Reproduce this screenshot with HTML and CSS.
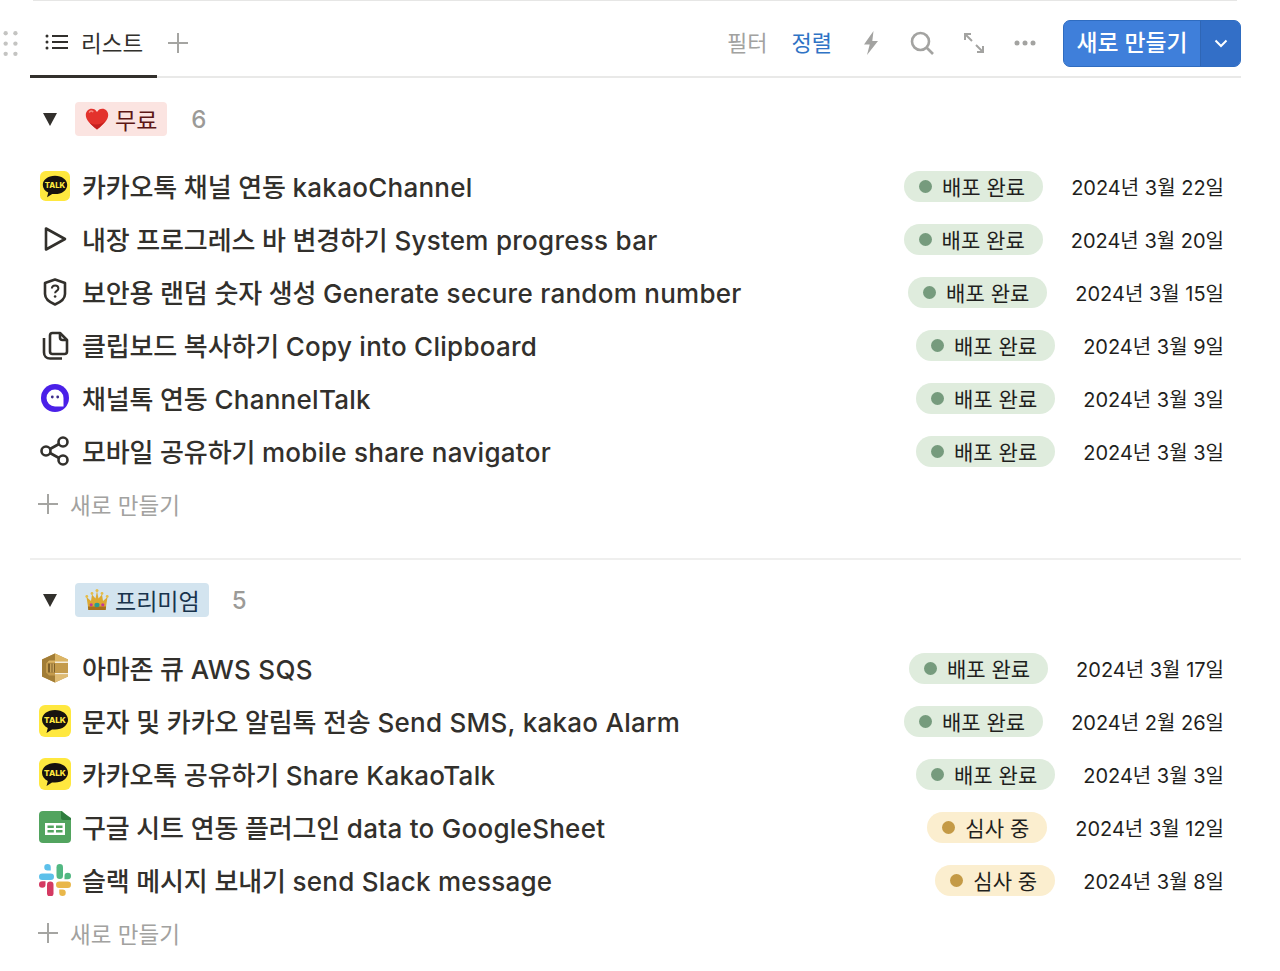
FILE: index.html
```html
<!DOCTYPE html>
<html lang="ko">
<head>
<meta charset="utf-8">
<title>리스트</title>
<link rel="stylesheet" href="styles.css">
</head>
<body>
<svg class="defs" width="0" height="0" aria-hidden="true">
  <defs>
    <symbol id="talk" viewBox="0 0 32 32">
      <rect width="32" height="32" rx="6" fill="#ffe83f"/>
      <path d="M16 5C8.500 5 3 9.300 3 14.800c0 3.500 2.300 6.500 5.800 8.200l-1.300 5 5.500-3.600c1 .2 2 .2 3 .2 7.500 0 13-4.300 13-9.800S23.500 5 16 5z" fill="#17120f"/>
      <text x="16" y="18.200" text-anchor="middle" class="talk-text">TALK</text>
    </symbol>
  </defs>
</svg>
<svg class="grip" viewBox="0 0 14 24" aria-hidden="true">
  <circle cx="3" cy="3" r="2"/><circle cx="12" cy="3" r="2"/>
  <circle cx="3" cy="12.500" r="2"/><circle cx="12" cy="12.500" r="2"/>
  <circle cx="3" cy="22" r="2"/><circle cx="12" cy="22" r="2"/>
</svg>
<main class="page">
  <div class="top-rule"></div>
  <header class="toolbar">
    <div class="tab">
      <svg class="tab-icon" viewBox="0 0 24 16" aria-hidden="true">
        <circle cx="2" cy="2" r="1.500"/><circle cx="2" cy="8" r="1.500"/><circle cx="2" cy="14" r="1.500"/>
        <path d="M7 2h16M7 8h16M7 14h16" stroke="#32302c" stroke-width="2" fill="none"/>
      </svg>
      <span>리스트</span>
    </div>
    <svg class="tab-add" viewBox="0 0 20 20" aria-hidden="true"><path d="M10 0v20M0 10h20"/></svg>
    <div class="tools">
      <span class="tool-text">필터</span>
      <span class="tool-text active">정렬</span>
      <svg class="tool-icon bolt" viewBox="0 0 16 24" aria-hidden="true"><path d="M10.500 0 1 13.500h5.700L4 24l11-14H9.300z"/></svg>
      <svg class="tool-icon search" viewBox="0 0 24 24" aria-hidden="true"><circle cx="10.500" cy="10.500" r="8.500"/><path d="m16.500 16.500 6.500 6.500"/></svg>
      <svg class="tool-icon expand" viewBox="0 0 22 22" aria-hidden="true"><path d="M2 8V2h6M2 2l7 7M20 14v6h-6M20 20l-7-7"/></svg>
      <svg class="tool-icon more" viewBox="0 0 22 6" aria-hidden="true"><circle cx="3" cy="3" r="2.500"/><circle cx="11" cy="3" r="2.500"/><circle cx="19" cy="3" r="2.500"/></svg>
      <div class="new-btn">
        <span class="new-label">새로 만들기</span>
        <span class="new-caret"><svg viewBox="0 0 14 9" aria-hidden="true"><path d="m1.500 1.500 5.500 5.500 5.500-5.500"/></svg></span>
      </div>
    </div>
  </header>

  <section class="group first">
    <div class="group-head">
      <span class="triangle"></span>
      <span class="label red">
        <svg class="label-emoji" viewBox="0 0 24 24" aria-hidden="true"><path d="M12 22.500C5 16.800.8 12.800.8 7.900.8 4.300 3.500 1.700 6.700 1.700c2.300 0 4.300 1.200 5.300 3.300 1-2.100 3-3.300 5.300-3.300 3.200 0 5.900 2.600 5.900 6.200 0 4.900-4.200 8.900-11.200 14.600z" fill="#e3322c"/><path d="M12 22.500c-3-2.400-5.500-4.600-7.300-6.800 5 3 12 2.500 16-2.500C19 16 16 19.300 12 22.500z" fill="#c4201f"/><path d="M4.500 5c1-1 2.500-1 3.300-.4" stroke="#f58a80" stroke-width="1.500" fill="none" stroke-linecap="round"/></svg>
        무료
      </span>
      <span class="count">6</span>
    </div>
    <ul class="rows">
      <li class="row">
        <svg class="row-icon talk small" aria-hidden="true"><use href="#talk"/></svg>
        <span class="title">카카오톡 채널 연동 <span class="en">kakaoChannel</span></span>
        <span class="status done"><i></i>배포 완료</span><time>2024년 3월 22일</time>
      </li>
      <li class="row">
        <svg class="row-icon" viewBox="0 0 32 32" aria-hidden="true"><path class="line" d="M7 5.500v21L26 16z"/></svg>
        <span class="title">내장 프로그레스 바 변경하기 <span class="en">System progress bar</span></span>
        <span class="status done"><i></i>배포 완료</span><time>2024년 3월 20일</time>
      </li>
      <li class="row">
        <svg class="row-icon" viewBox="0 0 32 32" aria-hidden="true"><path class="line" d="M16 3.500 6 7v11c0 4.500 4 8 10 10.500C22 26 26 22.500 26 18V7z"/><path class="line thin" d="M12.800 12.500c.2-2 1.500-3 3.300-3 1.900 0 3.300 1.100 3.300 2.900 0 2.500-3.300 2.500-3.300 4.900"/><circle cx="16.100" cy="20.500" r="1.300" fill="#32302c"/></svg>
        <span class="title">보안용 랜덤 숫자 생성 <span class="en">Generate secure random number</span></span>
        <span class="status done"><i></i>배포 완료</span><time>2024년 3월 15일</time>
      </li>
      <li class="row">
        <svg class="row-icon" viewBox="0 0 32 32" aria-hidden="true"><path class="line" d="M11 9V6.500A2.500 2.500 0 0 1 13.500 4H21l7 7v11.500a2.500 2.500 0 0 1-2.500 2.500H13.500a2.500 2.500 0 0 1-2.500-2.500z"/><path class="line" d="M21 4v4.500a2.500 2.500 0 0 0 2.500 2.500H28"/><path class="line" d="M5 9v14.500C5 27 7.500 29.500 11 29.500h12"/></svg>
        <span class="title">클립보드 복사하기 <span class="en">Copy into Clipboard</span></span>
        <span class="status done"><i></i>배포 완료</span><time>2024년 3월 9일</time>
      </li>
      <li class="row">
        <svg class="row-icon" viewBox="0 0 32 32" aria-hidden="true"><circle cx="16" cy="16" r="14" fill="#4a20e8"/><path d="M16 7.500a8.500 8.500 0 1 0 0 17h8.500V16A8.500 8.500 0 0 0 16 7.500z" fill="#fff"/><circle cx="13.300" cy="15" r="1.400" fill="#3a2a8a"/><circle cx="18.700" cy="15" r="1.400" fill="#3a2a8a"/></svg>
        <span class="title">채널톡 연동 <span class="en">ChannelTalk</span></span>
        <span class="status done"><i></i>배포 완료</span><time>2024년 3월 3일</time>
      </li>
      <li class="row">
        <svg class="row-icon" viewBox="0 0 32 32" aria-hidden="true"><circle class="line" cx="7" cy="16" r="4.500"/><circle class="line" cx="24" cy="7" r="4.500"/><circle class="line" cx="24" cy="25" r="4.500"/><path class="line" d="m11 14 9-5M11 18l9 5"/></svg>
        <span class="title">모바일 공유하기 <span class="en">mobile share navigator</span></span>
        <span class="status done"><i></i>배포 완료</span><time>2024년 3월 3일</time>
      </li>
      <li class="row new-row">
        <svg class="new-plus" viewBox="0 0 20 20" aria-hidden="true"><path d="M10 0v20M0 10h20"/></svg>
        <span>새로 만들기</span>
      </li>
    </ul>
  </section>

  <section class="group second">
    <div class="group-head">
      <span class="triangle"></span>
      <span class="label blue">
        <svg class="label-emoji" viewBox="0 0 24 24" aria-hidden="true"><path d="M1.500 9l4.500 4L7 6.500l3.500 4L12 3l1.500 7.500 3.500-4 1 6.500 4.500-4L20.500 22h-17z" fill="#dca931"/><path d="M3.300 22h17.400l.4-3.500H2.900z" fill="#a8701c"/><circle cx="1.800" cy="8.500" r="1.400" fill="#e6bd4a"/><circle cx="7" cy="5.500" r="1.400" fill="#e6bd4a"/><circle cx="12" cy="2.500" r="1.500" fill="#e6bd4a"/><circle cx="17" cy="5.500" r="1.400" fill="#e6bd4a"/><circle cx="22.200" cy="8.500" r="1.400" fill="#e6bd4a"/><ellipse cx="12" cy="17" rx="2.600" ry="2.300" fill="#2a9d8f"/><circle cx="6.200" cy="16.800" r="1.600" fill="#c2379a"/><circle cx="17.800" cy="16.800" r="1.600" fill="#c2379a"/></svg>
        프리미엄
      </span>
      <span class="count">5</span>
    </div>
    <ul class="rows">
      <li class="row">
        <svg class="row-icon" viewBox="0 0 32 32" aria-hidden="true"><path d="M16 1.500 29 7.500v17l-13 6-13-6v-17z" fill="#c49b4c"/><path d="M16 1.500 29 7.500v3l-13 0-8 0z" fill="#dcb565"/><path d="M3 7.500 16 1.500v7H10l-3 3v9l3 3h6v7L3 24.500z" fill="#a27d36"/><path d="M9 11.500h7v9H9z" fill="#7d5f28"/><path d="M11 11.500h1.500v9H11zM13.500 11.500H15v9h-1.500z" fill="#c9a45c"/><path d="M16 9.500 29 9.500v1.500H16zM16 21h13v1.500H16z" fill="#f4ecd9"/><path d="M16 22.500h13v2l-13 6z" fill="#dfbb72"/></svg>
        <span class="title">아마존 큐 <span class="en">AWS SQS</span></span>
        <span class="status done"><i></i>배포 완료</span><time>2024년 3월 17일</time>
      </li>
      <li class="row">
        <svg class="row-icon talk" aria-hidden="true"><use href="#talk"/></svg>
        <span class="title">문자 및 카카오 알림톡 전송 <span class="en">Send SMS, kakao Alarm</span></span>
        <span class="status done"><i></i>배포 완료</span><time>2024년 2월 26일</time>
      </li>
      <li class="row">
        <svg class="row-icon talk" aria-hidden="true"><use href="#talk"/></svg>
        <span class="title">카카오톡 공유하기 <span class="en">Share KakaoTalk</span></span>
        <span class="status done"><i></i>배포 완료</span><time>2024년 3월 3일</time>
      </li>
      <li class="row">
        <svg class="row-icon" viewBox="0 0 32 32" aria-hidden="true"><path d="M4 0h19l9 9v19a4 4 0 0 1-4 4H4a4 4 0 0 1-4-4V4a4 4 0 0 1 4-4z" fill="#52a45f"/><path d="M22 0l10 7v2h-8a2 2 0 0 1-2-2z" fill="#2f7d3f"/><path d="M6 12h20v12H6z" fill="#fff"/><path d="M8.500 14.500h6.300v2.500H8.500zM17 14.500h6.500v2.500H17zM8.500 19h6.300v2.500H8.500zM17 19h6.500v2.500H17z" fill="#52a45f"/></svg>
        <span class="title">구글 시트 연동 플러그인 <span class="en">data to GoogleSheet</span></span>
        <span class="status wait"><i></i>심사 중</span><time>2024년 3월 12일</time>
      </li>
      <li class="row">
        <svg class="row-icon" viewBox="0 0 32 32" aria-hidden="true">
          <rect x="0" y="9.500" width="15" height="6.500" rx="3.250" fill="#5cc0ea"/><path d="M8.500 0a3.250 3.250 0 0 0 0 6.500h3.250V3.250A3.250 3.250 0 0 0 8.500 0z" fill="#5cc0ea"/>
          <rect x="17.500" y="0" width="6.500" height="15" rx="3.250" fill="#52b882"/><path d="M32 12a3.250 3.250 0 0 0-6.500 0v3.250h3.250A3.250 3.250 0 0 0 32 12z" fill="#52b882"/>
          <rect x="17" y="17.500" width="15" height="6.500" rx="3.250" fill="#e9b74a"/><path d="M23.500 32a3.250 3.250 0 0 0 0-6.500h-3.250v3.250A3.250 3.250 0 0 0 23.500 32z" fill="#e9b74a"/>
          <rect x="8" y="17.500" width="6.500" height="15" rx="3.250" fill="#d43a62"/><path d="M0 20.500a3.250 3.250 0 0 0 6.500 0v-3.250H3.250A3.250 3.250 0 0 0 0 20.500z" fill="#d43a62"/>
        </svg>
        <span class="title">슬랙 메시지 보내기 <span class="en">send Slack message</span></span>
        <span class="status wait"><i></i>심사 중</span><time>2024년 3월 8일</time>
      </li>
      <li class="row new-row">
        <svg class="new-plus" viewBox="0 0 20 20" aria-hidden="true"><path d="M10 0v20M0 10h20"/></svg>
        <span>새로 만들기</span>
      </li>
    </ul>
  </section>
</main>
</body>
</html>
```
FILE: styles.css
```css
* { box-sizing: border-box; }
html, body { margin: 0; padding: 0; }
body {
  background: #fff;
  color: #32302c;
  font-family: Inter, "Noto Sans CJK KR", "Liberation Sans", sans-serif;
  height: 971px;
  overflow: hidden;
  position: relative;
}
.defs { position: absolute; }
.talk-text { font: 800 8.2px Inter, sans-serif; fill: #ffe83f; }
.grip { position: absolute; left: 2px; top: 30px; width: 16px; height: 26px; fill: #c4c4c2; }
.page { padding: 0 39px 0 30px; }
.top-rule { height: 1px; margin: 0 4px 0 3px; background: #e6e6e5; }

.toolbar {
  display: flex;
  align-items: stretch;
  height: 77px;
  border-bottom: 2px solid #e9e9e8;
}
.tab {
  display: flex;
  align-items: center;
  gap: 12px;
  width: 127px;
  height: 77px;
  padding: 8px 0 0 15px;
  border-bottom: 3px solid #32302c;
  font-size: 22.5px;
}
.tab-icon { width: 24px; height: 16px; fill: #32302c; flex: none; }
.tab-add { width: 20px; height: 20px; margin: 32px 0 0 11px; stroke: #a5a5a2; stroke-width: 2; fill: none; }
.tools { display: flex; align-items: center; margin-left: auto; padding-top: 10px; }
.tool-text { font-size: 22px; color: #a2a2a0; margin: 0 24px 6px 0; }
.tool-text.active { color: #2f73c5; margin-right: 31px; }
.tool-icon { flex: none; margin-bottom: 2px; }
.bolt { width: 16px; height: 24px; fill: #a3a3a1; margin-right: 31px; }
.search { width: 24px; height: 24px; fill: none; stroke: #a3a3a1; stroke-width: 2.600; margin-right: 29px; }
.expand { width: 22px; height: 22px; fill: none; stroke: #a3a3a1; stroke-width: 2; margin-right: 29px; }
.more { width: 22px; height: 6px; fill: #a3a3a1; margin-right: 27px; }
.new-btn {
  display: flex;
  width: 178px;
  height: 47px;
  background: #3f7fda;
  border: 1px solid #2f6cc0;
  border-radius: 7px;
  color: #fff;
  overflow: hidden;
}
.new-label { width: 136px; text-align: center; font-size: 22.8px; font-weight: 500; line-height: 44px; }
.new-caret { flex: 1; display: flex; align-items: center; justify-content: center; background: #336fc7; border-left: 1px solid #2f66b5; }
.new-caret svg { width: 14px; height: 9px; fill: none; stroke: #fff; stroke-width: 2; }

.group { padding-top: 24px; }
.group.first { border-bottom: 2px solid #efefee; height: 482px; }
.group.second { padding-top: 23px; }
.group-head { display: flex; align-items: center; height: 34px; }
.triangle {
  width: 0; height: 0;
  margin: 0 1px 0 13px;
  border-left: 7.500px solid transparent;
  border-right: 7.500px solid transparent;
  border-top: 13px solid #32302c;
}
.label {
  display: flex;
  align-items: center;
  gap: 6px;
  height: 34px;
  margin-left: 17px;
  padding: 0 10px;
  border-radius: 4px;
  font-size: 23px;
}
.label.red { background: #fbe4e1; color: #5d1715; }
.label.blue { background: #d3e4ef; color: #18334c; padding-right: 9px; }
.label-emoji { width: 24px; height: 24px; flex: none; }
.count { margin-left: 24px; font-size: 24px; font-weight: 500; color: #9b9a97; }
.label.blue + .count { margin-left: 23px; }

.rows { list-style: none; margin: 23px 0 0; padding: 0; }
.group.second .rows { margin-top: 24px; }
.row { display: flex; align-items: center; height: 53px; padding-right: 17px; }
.row-icon { width: 32px; height: 32px; flex: none; margin: 0 11px 0 9px; }
.row-icon.small { width: 30px; height: 30px; margin: 0 12px 0 10px; }
.line { fill: none; stroke: #32302c; stroke-width: 2.600; stroke-linejoin: round; }
.line.thin { stroke-width: 2; }
.title { flex: 1; font-size: 26px; font-weight: 500; color: #32302c; white-space: nowrap; letter-spacing: -.15px; }
.title .en { letter-spacing: .27px; }
.status {
  display: flex;
  align-items: center;
  height: 31px;
  margin-top: 1px;
  padding: 0 18px 0 15px;
  border-radius: 16px;
  font-size: 21px;
  color: #1f1f1d;
  white-space: nowrap;
}
.status i { width: 13px; height: 13px; border-radius: 50%; margin-right: 10px; flex: none; }
.status.done { background: #dfecdd; }
.status.done i { background: #769b7d; }
.status.wait { background: #fbeecf; }
.status.wait i { background: #c49a46; }
time { margin: 1px 0 0 28px; font-size: 20px; color: #1f1f1d; white-space: nowrap; }
.new-row { color: #a2a2a0; font-size: 22.5px; }
.new-plus { width: 20px; height: 20px; margin: 0 12px 0 8px; stroke: #a5a5a2; stroke-width: 2; fill: none; flex: none; }
```
